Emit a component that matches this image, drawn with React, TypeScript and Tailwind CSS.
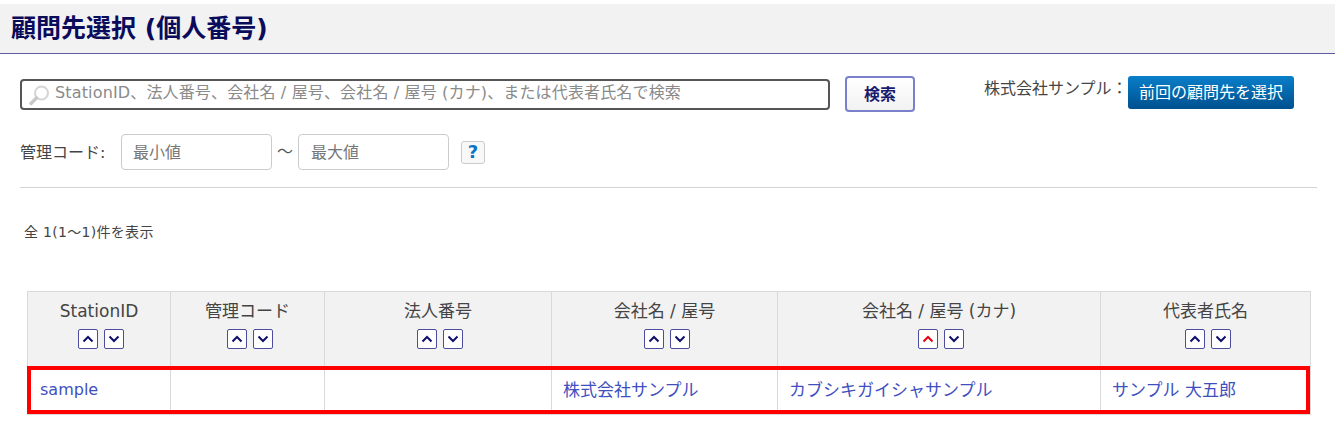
import React from 'react';

const font = '[font-family:"DejaVu_Sans","Noto_Sans_CJK_JP",sans-serif]';

const columns = [
  { label: 'StationID', width: 'w-[143px]', active: false },
  { label: '管理コード', width: 'w-[154px]', active: false },
  { label: '法人番号', width: 'w-[227px]', active: false },
  { label: '会社名 / 屋号', width: 'w-[226px]', active: false },
  { label: '会社名 / 屋号 (カナ)', width: 'w-[323px]', active: true },
  { label: '代表者氏名', width: 'w-[210px]', active: false },
];

const row = ['sample', '', '', '株式会社サンプル', 'カブシキガイシャサンプル', 'サンプル 大五郎'];

function SortButton({ dir, active }: { dir: 'up' | 'down'; active?: boolean }) {
  return (
    <span className="flex h-[20px] w-[20px] items-center justify-center rounded-[2px] border border-[#4d4d9e] bg-white">
      <svg width="12" height="8" viewBox="0 0 12 8" fill="none">
        <path
          d={dir === 'up' ? 'M1.5 6.5L6 2l4.5 4.5' : 'M1.5 1.5L6 6l4.5-4.5'}
          stroke={active ? '#e60012' : '#10106a'}
          strokeWidth="2"
        />
      </svg>
    </span>
  );
}

export default function App() {
  return (
    <div className={`${font} h-[438px] w-[1335px] overflow-hidden bg-white pt-[4px] text-[#444]`}>
      {/* Title */}
      <div className="flex h-[50px] items-center border-b border-[#5c5ca3] bg-[#f2f2f2] pl-[11px]">
        <h1 className="text-[25px] leading-none font-bold text-[#0b0b5c]">顧問先選択 (個人番号)</h1>
      </div>

      <div className="px-[20px]">
        {/* Search */}
        <div className="flex items-start pt-[22px]">
          <div className="mt-[3px] flex h-[31px] w-[810px] items-center rounded-[4px] border-2 border-[#555] bg-white pl-[6px]">
            <svg width="24" height="22" viewBox="0 0 24 22" fill="none" className="shrink-0">
              <circle cx="13.5" cy="9" r="6.5" stroke="#d4d4d4" strokeWidth="2" />
              <path d="M8.5 14L3 19.5" stroke="#c8c8c8" strokeWidth="3.5" strokeLinecap="round" />
            </svg>
            <span className="ml-[3px] pb-[3px] text-[16px] leading-none tracking-[0.15px] text-[#8a8a8a]">
              StationID、法人番号、会社名 / 屋号、会社名 / 屋号 (カナ)、または代表者氏名で検索
            </span>
          </div>
          <button className="ml-[15px] flex h-[36px] w-[70px] items-center justify-center rounded-[4px] border-2 border-[#7b80cc] bg-gradient-to-b from-white to-[#f2f2f2] pt-[1px] text-[16px] font-bold text-[#1a1a70]">
            検索
          </button>
          <span className="mt-[1px] ml-[69px] w-[144px] text-[16px] leading-[24px] text-[#444]">株式会社サンプル：</span>
          <button className="flex h-[33px] w-[166px] items-center justify-center rounded-[3px] bg-gradient-to-b from-[#0a7fc9] to-[#00508f] text-[16px] text-white">
            前回の顧問先を選択
          </button>
        </div>

        {/* Range */}
        <div className="mt-[22px] flex items-center">
          <span className="w-[101px] pt-[1px] text-[16px] text-[#444]">管理コード:</span>
          <div className="flex h-[36px] w-[151px] items-center rounded-[4px] border border-[#ccc] pt-[1px] pl-[11px] text-[16px] text-[#777]">
            最小値
          </div>
          <span className="w-[26px] text-center text-[16px] text-[#555]">～</span>
          <div className="flex h-[36px] w-[151px] items-center rounded-[4px] border border-[#ccc] pt-[1px] pl-[12px] text-[16px] text-[#777]">
            最大値
          </div>
          <span className="ml-[12px] flex h-[23px] w-[24px] items-center justify-center rounded-[3px] border border-[#ccc] bg-[#f8f8f8] text-[18px] leading-none font-bold text-[#0a74c4]">
            ?
          </span>
        </div>

        <hr className="mt-[17px] w-[1297px] border-t border-[#d4d4d4]" />

        <p className="mt-[35px] pl-[4px] text-[14px] leading-[18px] tracking-[0.3px] text-[#444]">全 1(1～1)件を表示</p>
      </div>

      {/* Table */}
      <div className="relative mt-[50px] ml-[27px] w-[1283px]">
        <table className="w-[1283px] table-fixed border-collapse">
          <colgroup>
            {columns.map((c) => (
              <col key={c.label} className={c.width} />
            ))}
          </colgroup>
          <thead>
            <tr className="h-[75px]">
              {columns.map((c) => (
                <th key={c.label} className="border border-[#d9d9d9] bg-[#f2f2f2] align-top font-normal">
                  <div className="pt-[6px] text-[17px] leading-[26px] text-[#444]">{c.label}</div>
                  <div className="mt-[5px] flex justify-center gap-[6px] pl-[4px]">
                    <SortButton dir="up" active={c.active} />
                    <SortButton dir="down" />
                  </div>
                </th>
              ))}
            </tr>
          </thead>
          <tbody>
            <tr className="h-[48px]">
              {row.map((v, i) => (
                <td
                  key={i}
                  className="border border-[#d9d9d9] pb-[1px] pl-[11px] text-[17px] leading-[24px] text-[#3f4fc0] first:pl-[12px] first:text-[16px]"
                >
                  {v}
                </td>
              ))}
            </tr>
          </tbody>
        </table>
        {/* red highlight over the data row */}
        <div className="pointer-events-none absolute top-[75px] left-0 h-[48px] w-[1283px] border-4 border-[#ff0000]" />
      </div>
    </div>
  );
}
